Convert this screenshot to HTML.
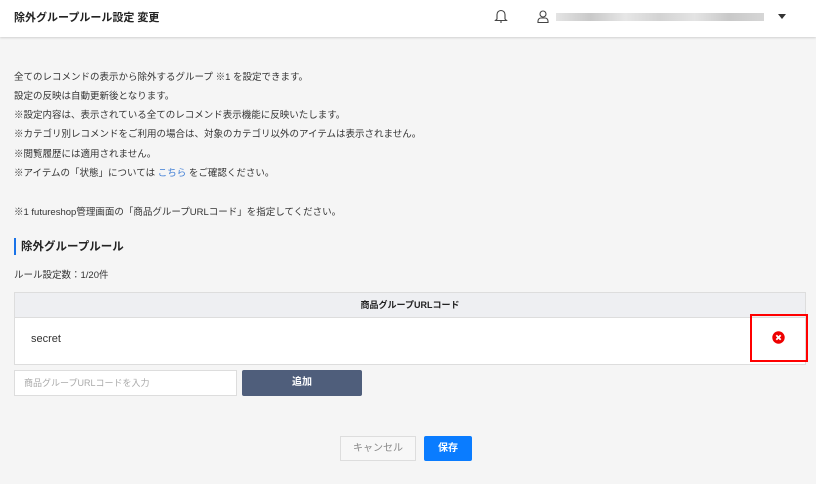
<!DOCTYPE html>
<html><head><meta charset="utf-8"><style>
*{margin:0;padding:0;box-sizing:border-box}
body{width:816px;height:484px;background:#f5f5f5;font-family:"Liberation Sans","Noto Sans CJK JP",sans-serif;color:#333;position:relative;overflow:hidden}
.hdr{position:absolute;left:0;top:0;width:816px;height:37px;background:#fff;box-shadow:0 1px 2px rgba(0,0,0,.15)}
.ttl{position:absolute;left:14px;top:9px;font-size:11px;font-weight:bold;color:#222}
.t{position:absolute;left:14px;font-size:9.5px;color:#333;white-space:nowrap}
a{color:#3a7bd5;text-decoration:none}
.blur{position:absolute;left:556px;top:13px;width:208px;height:8px;background:linear-gradient(90deg,#ddd,#bbb,#e0e0e0,#c8c8c8,#ddd,#bbb,#ccc);opacity:.8}
</style></head><body>
<div class="hdr">
<div class="ttl">除外グループルール設定 変更</div>
<svg style="position:absolute;left:494px;top:8px" width="14" height="16" viewBox="0 0 14 16" fill="none" stroke="#444" stroke-width="1.1"><path d="M3 11V6.5a4 4 0 0 1 8 0V11l1.5 1.5h-11z"/><path d="M6 14h2"/></svg>
<svg style="position:absolute;left:537px;top:10px" width="12" height="13" viewBox="0 0 12 13" fill="none" stroke="#444" stroke-width="1.1"><circle cx="6" cy="4" r="3"/><path d="M1 12.5v-1.5a3 3 0 0 1 3-3h4a3 3 0 0 1 3 3v1.5z"/></svg>
<div class="blur"></div>
<div style="position:absolute;left:778px;top:14px;width:0;height:0;border-left:4px solid transparent;border-right:4px solid transparent;border-top:5px solid #333"></div>
</div>
<div class="t" style="top:69px">全てのレコメンドの表示から除外するグループ ※1 を設定できます。</div>
<div class="t" style="top:88px">設定の反映は自動更新後となります。</div>
<div class="t" style="top:107px">※設定内容は、表示されている全てのレコメンド表示機能に反映いたします。</div>
<div class="t" style="top:126px">※カテゴリ別レコメンドをご利用の場合は、対象のカテゴリ以外のアイテムは表示されません。</div>
<div class="t" style="top:146px">※閲覧履歴には適用されません。</div>
<div class="t" style="top:165px">※アイテムの「状態」については <a>こちら</a> をご確認ください。</div>
<div class="t" style="top:204px">※1 futureshop管理画面の「商品グループURLコード」を指定してください。</div>
<div style="position:absolute;left:14px;top:238px;width:2px;height:17px;background:#1a73e8"></div>
<div class="t" style="left:21px;top:238px;font-size:11.5px;font-weight:bold;color:#222">除外グループルール</div>
<div class="t" style="top:267px">ルール設定数：1/20件</div>
<div style="position:absolute;left:14px;top:292px;width:792px;height:73px;border:1px solid #ddd;background:#fff">
<div style="height:25px;background:#eeeff2;border-bottom:1px solid #ddd;text-align:center;font-size:9px;font-weight:bold;line-height:24px;color:#222">商品グループURLコード</div>
<div style="position:absolute;left:16px;top:40px;font-size:11px">secret</div>
</div>
<div style="position:absolute;left:750px;top:314px;width:58px;height:48px;border:2px solid #f00"></div>
<svg style="position:absolute;left:772px;top:331px" width="13" height="13" viewBox="0 0 13 13"><circle cx="6.5" cy="6.5" r="6.2" fill="#e00"/><path d="M4.3 4.3l4.4 4.4M8.7 4.3l-4.4 4.4" stroke="#fff" stroke-width="1.8"/></svg>
<div style="position:absolute;left:14px;top:370px;width:223px;height:26px;border:1px solid #ddd;background:#fff;font-size:9px;color:#aaa;line-height:24px;padding-left:9px">商品グループURLコードを入力</div>
<div style="position:absolute;left:242px;top:370px;width:120px;height:26px;background:#4f5e7b;border-radius:2px;color:#fff;font-size:10px;font-weight:bold;text-align:center;line-height:26px">追加</div>
<div style="position:absolute;left:340px;top:436px;width:76px;height:25px;border:1px solid #ddd;background:#f7f7f7;color:#888;font-size:10px;text-align:center;line-height:23px">キャンセル</div>
<div style="position:absolute;left:424px;top:436px;width:48px;height:25px;background:#0a7cff;border-radius:2px;color:#fff;font-size:10px;font-weight:bold;text-align:center;line-height:25px">保存</div>
</body></html>
